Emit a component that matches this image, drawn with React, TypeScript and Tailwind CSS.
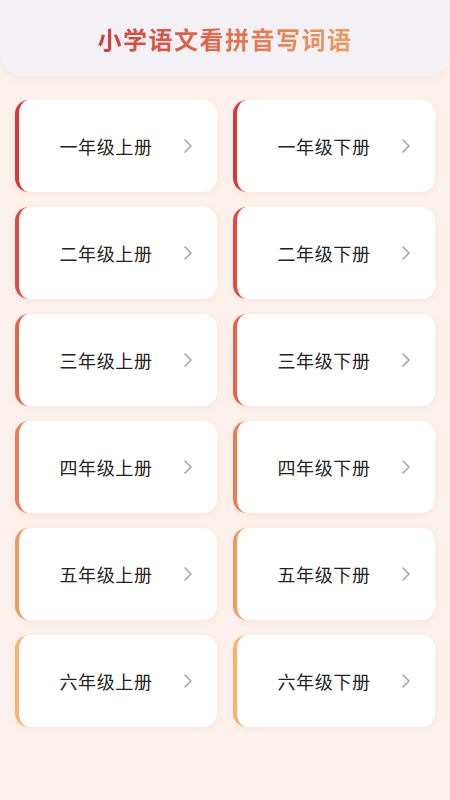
import React from "react"

const rows = [
  { grade: "一", color: "border-l-[#d6383b]" },
  { grade: "二", color: "border-l-[#dc4c43]" },
  { grade: "三", color: "border-l-[#e3654c]" },
  { grade: "四", color: "border-l-[#ea7f56]" },
  { grade: "五", color: "border-l-[#f09a61]" },
  { grade: "六", color: "border-l-[#f5b36c]" },
]

const Chevron = () => (
  <svg width="10" height="16" viewBox="0 0 10 16" fill="none" className="shrink-0">
    <path d="M2 2l6 6-6 6" stroke="#a6a6a6" strokeWidth="1.6" strokeLinecap="round" strokeLinejoin="round" />
  </svg>
)

const GradeCard = ({ label, color }: { label: string; color: string }) => (
  <button
    type="button"
    className={`h-[92px] flex items-center justify-center gap-[30px] pl-4 rounded-[14px] bg-white border-l-4 ${color} shadow-[0_2px_6px_rgba(230,150,120,0.12)]`}
  >
    <span className="text-[18px] text-[#222] tracking-[0.6px]">{label}</span>
    <Chevron />
  </button>
)

export default function App() {
  return (
    <div
      className="min-h-[800px] w-full bg-[#fcf1ec]"
      style={{ fontFamily: '"Noto Sans CJK SC", "Noto Sans", sans-serif' }}
    >
      <header className="h-[76px] flex items-center justify-center pt-[2px] bg-[#f4f1f6] rounded-b-[22px] shadow-[0_2px_8px_rgba(200,170,170,0.15)]">
        <h1 className="text-[24px] font-bold tracking-[1.5px] bg-gradient-to-r from-[#d23a3c] to-[#f09a5e] bg-clip-text text-transparent">
          小学语文看拼音写词语
        </h1>
      </header>
      <main className="grid grid-cols-2 gap-x-4 gap-y-[15px] px-[15px] pt-[24px]">
        {rows.map((r) => (
          <React.Fragment key={r.grade}>
            <GradeCard label={`${r.grade}年级上册`} color={r.color} />
            <GradeCard label={`${r.grade}年级下册`} color={r.color} />
          </React.Fragment>
        ))}
      </main>
    </div>
  )
}
